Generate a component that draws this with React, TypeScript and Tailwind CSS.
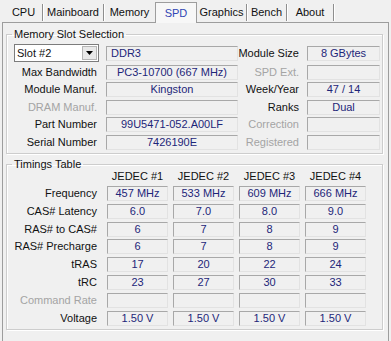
import React from "react";

const tabs = [
  { name: "CPU", w: "w-[38px]" },
  { name: "Mainboard", w: "w-[61px]" },
  { name: "Memory", w: "w-[51px]", noSep: true },
  { name: "SPD", w: "w-[42px]", active: true },
  { name: "Graphics", w: "w-[50px]" },
  { name: "Bench", w: "w-[40px]" },
  { name: "About", w: "w-[47px]" },
];

const slotRows: [string, string, boolean, string, string, boolean][] = [
  // label, value, labelDisabled, label2, value2, label2Disabled
  ["Max Bandwidth", "PC3-10700 (667 MHz)", false, "SPD Ext.", "", true],
  ["Module Manuf.", "Kingston", false, "Week/Year", "47 / 14", false],
  ["DRAM Manuf.", "", true, "Ranks", "Dual", false],
  ["Part Number", "99U5471-052.A00LF", false, "Correction", "", true],
  ["Serial Number", "7426190E", false, "Registered", "", true],
];

const timings: { label: string; values: string[]; disabled?: boolean }[] = [
  { label: "Frequency", values: ["457 MHz", "533 MHz", "609 MHz", "666 MHz"] },
  { label: "CAS# Latency", values: ["6.0", "7.0", "8.0", "9.0"] },
  { label: "RAS# to CAS#", values: ["6", "7", "8", "9"] },
  { label: "RAS# Precharge", values: ["6", "7", "8", "9"] },
  { label: "tRAS", values: ["17", "20", "22", "24"] },
  { label: "tRC", values: ["23", "27", "30", "33"] },
  { label: "Command Rate", values: ["", "", "", ""], disabled: true },
  { label: "Voltage", values: ["1.50 V", "1.50 V", "1.50 V", "1.50 V"] },
];

function Field({ children, className = "" }: { children?: React.ReactNode; className?: string }) {
  return (
    <div
      className={
        "h-[15px] flex items-center justify-center whitespace-nowrap overflow-hidden text-[#1d2679] border-t border-l border-t-[#a8a8a8] border-l-[#a8a8a8] border-b border-r border-b-[#e2e2e2] border-r-[#e2e2e2] " +
        className
      }
    >
      {children}
    </div>
  );
}

function Group({ title, children, className = "" }: { title: string; children: React.ReactNode; className?: string }) {
  return (
    <fieldset className={"border border-[#cdcdcd] shadow-[inset_1px_1px_0_#ffffff,1px_1px_0_#ffffff] " + className}>
      <legend className="ml-[5px] px-[2px] leading-[13px]">{title}</legend>
      {children}
    </fieldset>
  );
}

export default function App() {
  return (
    <div className="w-[391px] h-[341px] overflow-hidden bg-[#f0f0f0] text-[#111] text-[11px] leading-[13px] font-['Liberation_Sans',Arial,sans-serif]">
      {/* Tabs */}
      <div className="relative z-10 flex items-end h-[22px] pl-[5px]">
        {tabs.map((t) =>
          t.active ? (
            <div
              key={t.name}
              className={t.w + " h-[21px] mb-[-1px] pt-[1px] flex items-center justify-center bg-[#f7f7f7] border-l border-t border-r border-[#9d9d9d] text-[#2f45b4]"}
            >
              {t.name}
            </div>
          ) : (
            <div key={t.name} className={t.w + " h-[18px] mb-[1px] flex items-center justify-center"}>
              <span className="flex-1 text-center">{t.name}</span>
              {!t.noSep && <span className="w-[1px] h-[17px] bg-[#8e8e8e] shadow-[1px_0_0_#ffffff]" />}
            </div>
          )
        )}
      </div>

      {/* Panel */}
      <div className="ml-[2px] w-[387px] h-[320px] border border-[#9d9d9d] pl-[3px] pr-[5px] pt-[5px]">
        <Group title="Memory Slot Selection">
          <div className="flex flex-col gap-[2.5px] pt-[3px] pb-[3px]">
            <div className="flex items-center h-[18px]">
              <div className="w-[99px]">
                <div className="ml-[7px] w-[85px] h-[18px] bg-white border border-[#7c7c7c] flex items-center">
                  <span className="flex-1 pl-[2px]">Slot #2</span>
                  <span className="w-[15px] h-[14px] mr-[1px] bg-[#e8e8e8] border border-[#b5b5b5] flex items-center justify-center">
                    <svg width="7" height="4" viewBox="0 0 7 4">
                      <path d="M0 0h7L3.5 4z" fill="#000" />
                    </svg>
                  </span>
                </div>
              </div>
              <Field className="w-[132px] !justify-start pl-[4px]">DDR3</Field>
              <div className="w-[69px] text-right pr-[8px]">Module Size</div>
              <Field className="w-[73px]">8 GBytes</Field>
            </div>
            {slotRows.map(([l1, v1, d1, l2, v2, d2]) => (
              <div key={l1} className="flex items-center h-[15px]">
                <div className={"w-[99px] text-right pr-[9px] " + (d1 ? "text-[#a4a4a4]" : "")}>{l1}</div>
                <Field className="w-[132px]">{v1}</Field>
                <div className={"w-[69px] text-right pr-[8px] " + (d2 ? "text-[#a4a4a4]" : "")}>{l2}</div>
                <Field className="w-[73px]">{v2}</Field>
              </div>
            ))}
          </div>
        </Group>

        <Group title="Timings Table" className="mt-[4.5px]">
          <div className="pb-[3px]">
            <div className="flex h-[12px] leading-[12px] mt-[-1px] mb-[4px]">
              <div className="w-[100px]" />
              <div className="flex gap-[5px]">
                {["JEDEC #1", "JEDEC #2", "JEDEC #3", "JEDEC #4"].map((h) => (
                  <div key={h} className="w-[61px] text-center">
                    {h}
                  </div>
                ))}
              </div>
            </div>
            <div className="flex flex-col gap-[2.8px]">
              {timings.map((r) => (
                <div key={r.label} className="flex items-center h-[15px]">
                  <div className={"w-[100px] text-right pr-[10px] " + (r.disabled ? "text-[#a4a4a4]" : "")}>{r.label}</div>
                  <div className="flex gap-[5px]">
                    {r.values.map((v, i) => (
                      <Field key={i} className="w-[61px]">
                        {v}
                      </Field>
                    ))}
                  </div>
                </div>
              ))}
            </div>
          </div>
        </Group>
      </div>
    </div>
  );
}
